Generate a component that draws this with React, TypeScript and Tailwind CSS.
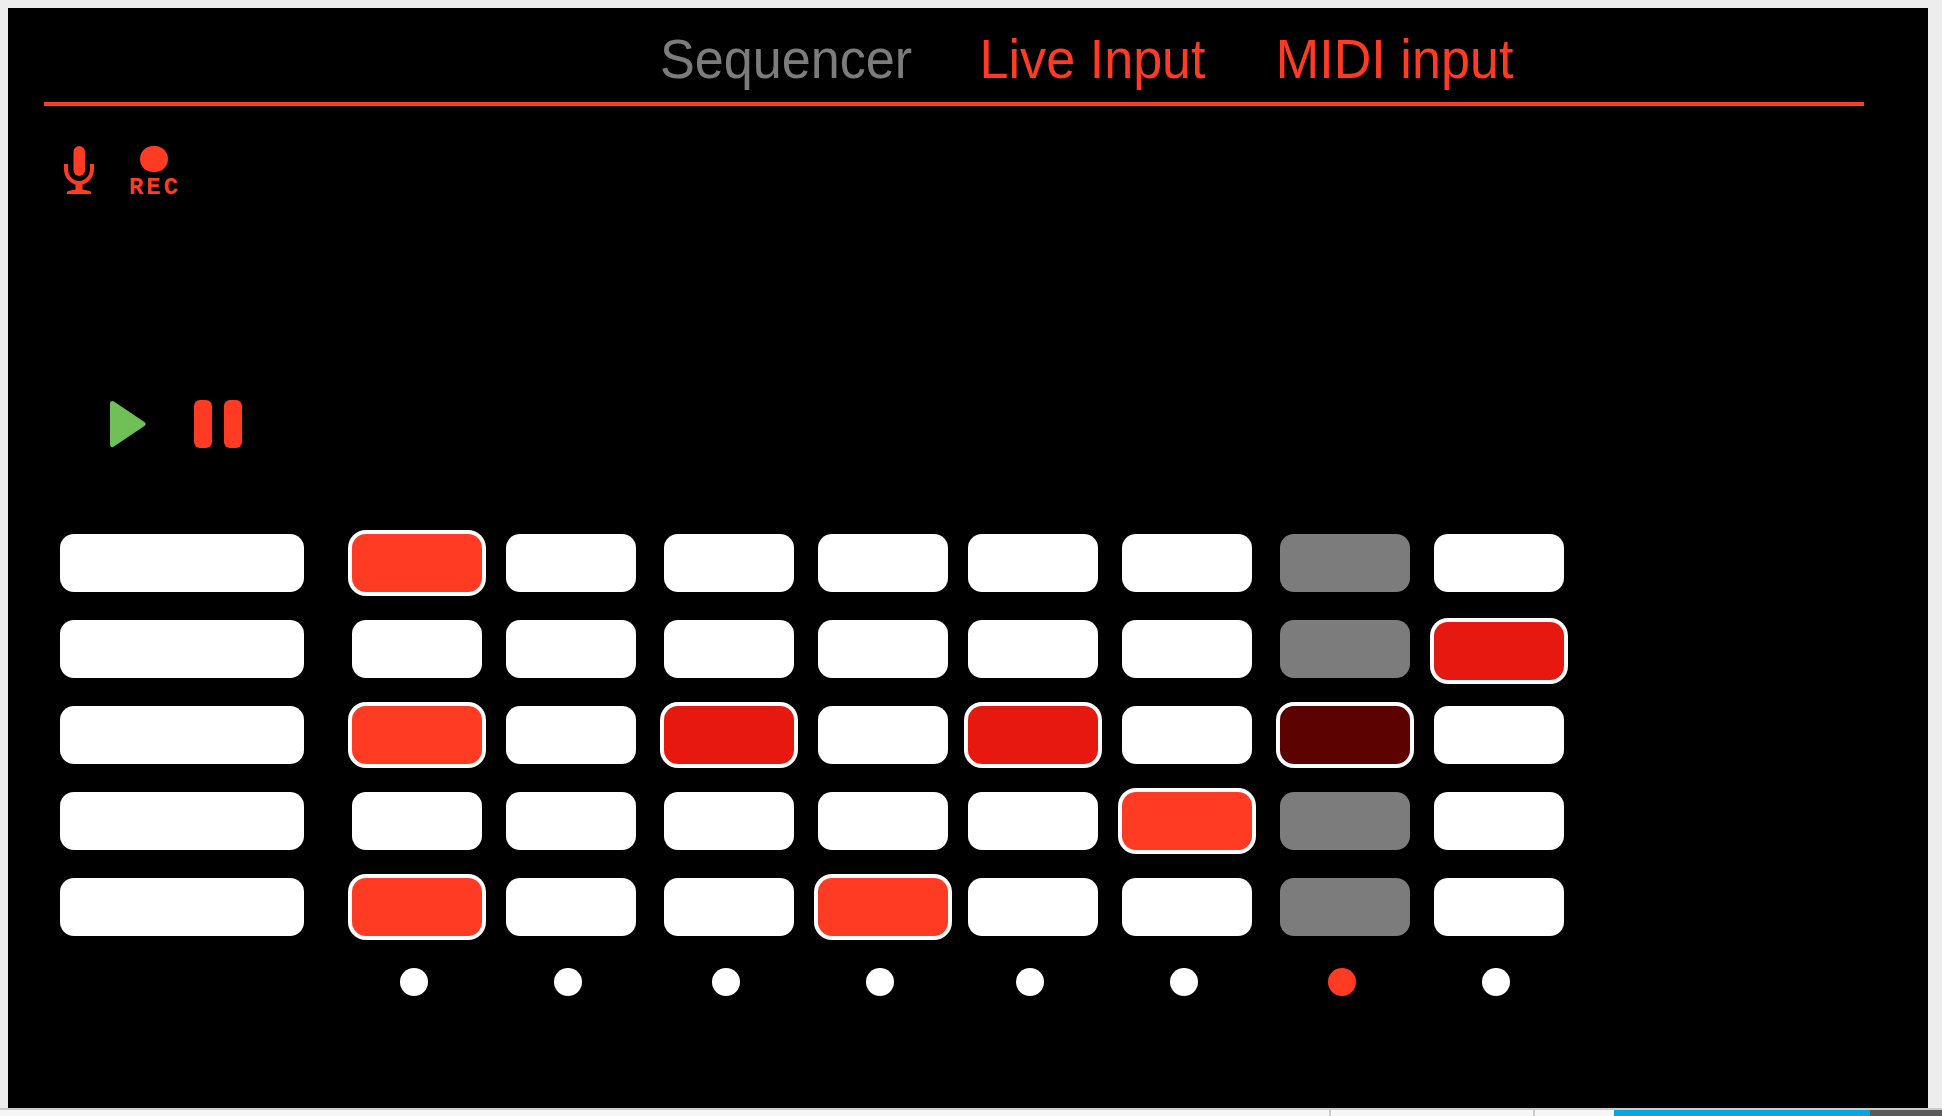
const RED = "bg-[#ff3b24] ring-4 ring-white";
const DEEP = "bg-[#e6180f] ring-4 ring-white";
const DROP = "bg-[#e6180f] ring-4 ring-white mt-[2px]";
const DARK = "bg-[#5c0200] ring-4 ring-white";
const OFF = "bg-white";
const MUTED = "bg-[#7c7c7c]";

// column spacing in the reference is uneven, so each step keeps its own margin
const stepGaps = [
  "ml-[48px]",
  "ml-[24px]",
  "ml-[28px]",
  "ml-[24px]",
  "ml-[20px]",
  "ml-[24px]",
  "ml-[28px]",
  "ml-[24px]",
];

const dotGaps = [
  "ml-[392px]",
  "ml-[126px]",
  "ml-[130px]",
  "ml-[126px]",
  "ml-[122px]",
  "ml-[126px]",
  "ml-[130px]",
  "ml-[126px]",
];

const rows = [
  [RED, OFF, OFF, OFF, OFF, OFF, MUTED, OFF],
  [OFF, OFF, OFF, OFF, OFF, OFF, MUTED, DROP],
  [RED, OFF, DEEP, OFF, DEEP, OFF, DARK, OFF],
  [OFF, OFF, OFF, OFF, OFF, RED, MUTED, OFF],
  [RED, OFF, OFF, RED, OFF, OFF, MUTED, OFF],
];

function MicIcon() {
  return (
    <svg width="30" height="48" viewBox="0 0 30 48" className="shrink-0">
      <rect x="9.5" y="0" width="11.5" height="30" rx="5.75" fill="#ff3b24" />
      <path d="M2 18v5a13 14 0 0 0 26 0v-5" fill="none" stroke="#ff3b24" strokeWidth="4" />
      <path d="M11.5 38h7v5.5l7.5 1.5q1.3.6 1.3 3H2.7q0-2.4 1.3-3l7.5-1.5z" fill="#ff3b24" />
    </svg>
  );
}

function PlayIcon() {
  return (
    <svg width="36" height="48" viewBox="0 0 36 48" className="shrink-0">
      <path d="M2.5 3.5L33 24L2.5 44.5Z" fill="#70bf57" stroke="#70bf57" strokeWidth="5" strokeLinejoin="round" />
    </svg>
  );
}

function App() {
  return (
    <div className="flex h-[1116px] w-[1942px] flex-col overflow-hidden bg-[#ededed] font-['Liberation_Sans',sans-serif]">
      <main className="mt-[8px] ml-[8px] h-[1100px] w-[1920px] shrink-0 bg-black">
        <nav className="ml-[36px] h-[98px] w-[1820px] border-b-4 border-[#ff3b24] pt-[21px] pl-[616px]">
          <div className="flex origin-left scale-x-[0.948] text-[55px] leading-[60px] whitespace-nowrap">
            <span className="text-[#7c7c7c]">Sequencer</span>
            <span className="ml-[71px] text-[#ff3b24]">Live Input</span>
            <span className="ml-[74px] text-[#ff3b24]">MIDI input</span>
          </div>
        </nav>

        <div className="mt-[40px] ml-[56px] flex h-[48px]">
          <MicIcon />
          <div className="ml-[36px] flex w-[48px] flex-col items-center">
            <div className="h-[26px] w-[28px] shrink-0 rounded-full bg-[#ff3b24]" />
            <span className="mt-[7px] shrink-0 pl-[2px] font-['Liberation_Mono',monospace] text-[24px] leading-[18px] font-bold tracking-[3px] text-[#ff3b24]">
              REC
            </span>
          </div>
        </div>

        <div className="mt-[206px] ml-[102px] flex h-[48px]">
          <PlayIcon />
          <div className="ml-[48px] h-[48px] w-[18px] rounded-[6px] bg-[#ff3b24]" />
          <div className="ml-[12px] h-[48px] w-[18px] rounded-[6px] bg-[#ff3b24]" />
        </div>

        <div className="mt-[86px] ml-[52px] flex flex-col gap-[28px]">
          {rows.map((row, r) => (
            <div key={r} className="flex h-[58px] items-start">
              <div className="h-[58px] w-[244px] rounded-[14px] bg-white" />
              {row.map((cell, c) => (
                <div key={c} className={`h-[58px] w-[130px] rounded-[14px] ${stepGaps[c]} ${cell}`} />
              ))}
            </div>
          ))}
        </div>

        <div className="mt-[32px] flex">
          {dotGaps.map((gap, i) => (
            <div
              key={i}
              className={`h-[28px] w-[28px] rounded-full ${gap} ${i === 6 ? "bg-[#ff3b24]" : "bg-white"}`}
            />
          ))}
        </div>
      </main>

      <footer className="flex h-[8px] w-full shrink-0 flex-col">
        <div className="h-[2px] bg-[#cccccc]" />
        <div className="flex h-[6px] bg-[#f6f6f6]">
          <div className="ml-[1329px] w-[2px] bg-[#cccccc]" />
          <div className="ml-[202px] w-[2px] bg-[#cccccc]" />
          <div className="ml-[79px] w-[256px] bg-[#00a8e0]" />
          <div className="w-[72px] bg-[#5a5a5a]" />
        </div>
      </footer>
    </div>
  );
}

export default App;
